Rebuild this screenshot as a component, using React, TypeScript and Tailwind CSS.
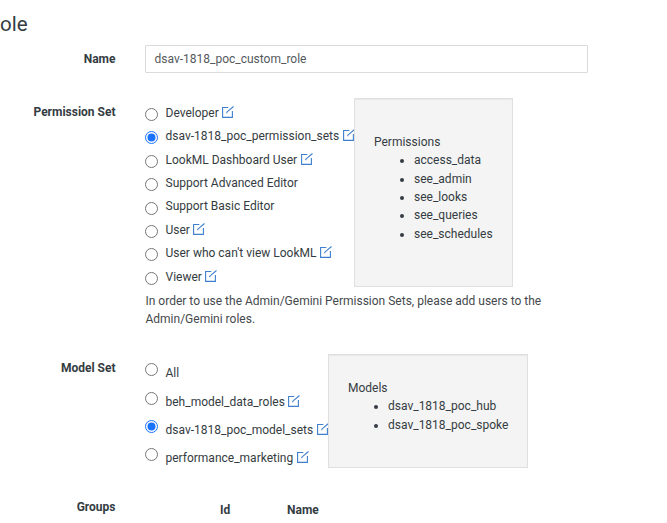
import React from "react";

type Option = { label: string; editable?: boolean; checked?: boolean };

const permissionSets: Option[] = [
  { label: "Developer", editable: true },
  { label: "dsav-1818_poc_permission_sets", editable: true, checked: true },
  { label: "LookML Dashboard User", editable: true },
  { label: "Support Advanced Editor" },
  { label: "Support Basic Editor" },
  { label: "User", editable: true },
  { label: "User who can't view LookML", editable: true },
  { label: "Viewer", editable: true },
];

const modelSets: Option[] = [
  { label: "All" },
  { label: "beh_model_data_roles", editable: true },
  { label: "dsav-1818_poc_model_sets", editable: true, checked: true },
  { label: "performance_marketing", editable: true },
];

function EditIcon() {
  return (
    <svg className="mb-[2px] ml-[3.5px] h-[12px] w-[12px] shrink-0" viewBox="0 0 12 12" fill="none" stroke="#3f7fce" strokeWidth="1.1">
      <path d="M6.3 1.5H0.6v9.9h9.8v-6.4" />
      <path d="M4.8 7.3V6.2L11.5 0.5" />
    </svg>
  );
}

function Radio({ checked }: { checked?: boolean }) {
  return (
    <svg className="h-[13px] w-[13px] shrink-0" viewBox="0 0 13 13" role="radio" aria-checked={!!checked}>
      <circle cx="6.5" cy="6.5" r="6" fill="#fff" stroke={checked ? "#1a73ff" : "#767676"} />
      {checked && <circle cx="6.5" cy="6.5" r="4" fill="#1a73ff" />}
    </svg>
  );
}

function FieldLabel({ children }: { children: React.ReactNode }) {
  return <div className="w-[115.5px] shrink-0 text-right font-bold leading-[18px]">{children}</div>;
}

function Details({ title, items }: { title: string; items: string[] }) {
  return (
    <>
      <div>{title}</div>
      <ul className="list-disc pl-[40px]">
        {items.map((item) => (
          <li key={item}>{item}</li>
        ))}
      </ul>
    </>
  );
}

export default function App() {
  return (
    <main className="h-[523px] w-[667px] overflow-hidden bg-white font-[Roboto,sans-serif] text-[12px] leading-[18.4px] text-[#343c42]">
      <h1 className="h-[45px] pt-[10px] text-[20.5px] leading-[28px]">ole</h1>

      <section className="flex h-[53px]">
        <div className="pt-[5px]">
          <FieldLabel>Name</FieldLabel>
        </div>
        <div className="ml-[29.5px] flex h-[28px] w-[443px] items-center rounded-[1px] border border-[#d9dbdd] pl-[8.5px] text-[#55595c]">
          dsav-1818_poc_custom_role
        </div>
      </section>

      <section className="flex h-[194px]">
        <div className="pt-[5px]">
          <FieldLabel>Permission Set</FieldLabel>
        </div>
        <div className="ml-[29.5px] w-[209px] shrink-0 pt-[3.4px]">
          {permissionSets.map((o) => (
            <div key={o.label} className="flex h-[23.4px] items-center whitespace-nowrap">
              <div className="mr-[7.5px] pt-[3px]">
                <Radio checked={o.checked} />
              </div>
              <span>{o.label}</span>
              {o.editable && <EditIcon />}
            </div>
          ))}
        </div>
        <aside className="h-[189px] w-[159px] border border-[#dfe0e1] bg-[#f4f4f4] pl-[19px] pt-[33.7px] shadow-[inset_0_1px_1px_rgba(0,0,0,0.05)]">
          <Details title="Permissions" items={["access_data", "see_admin", "see_looks", "see_queries", "see_schedules"]} />
        </aside>
      </section>

      <p className="ml-[145.5px] h-[62px] w-[410px] leading-[18px] text-[#45494c]">
        In order to use the Admin/Gemini Permission Sets, please add users to the Admin/Gemini roles.
      </p>

      <section className="flex h-[144px]">
        <div className="pt-[5px]">
          <FieldLabel>Model Set</FieldLabel>
        </div>
        <div className="ml-[29.5px] w-[183px] shrink-0 pt-[5.3px]">
          {modelSets.map((o) => (
            <div key={o.label} className="flex h-[28.3px] items-center whitespace-nowrap">
              <div className="mr-[7.5px] pb-[7px]">
                <Radio checked={o.checked} />
              </div>
              <span>{o.label}</span>
              {o.editable && <EditIcon />}
            </div>
          ))}
        </div>
        <aside className="h-[114px] w-[200px] border border-[#dfe0e1] bg-[#f4f4f4] pl-[19px] pt-[24px] shadow-[inset_0_1px_1px_rgba(0,0,0,0.05)]">
          <Details title="Models" items={["dsav_1818_poc_hub", "dsav_1818_poc_spoke"]} />
        </aside>
      </section>

      <section className="flex leading-[18px]">
        <FieldLabel>Groups</FieldLabel>
        <div className="ml-[104.5px] mt-[3px] w-[67px] font-bold">Id</div>
        <div className="mt-[3px] font-bold">Name</div>
      </section>
    </main>
  );
}
